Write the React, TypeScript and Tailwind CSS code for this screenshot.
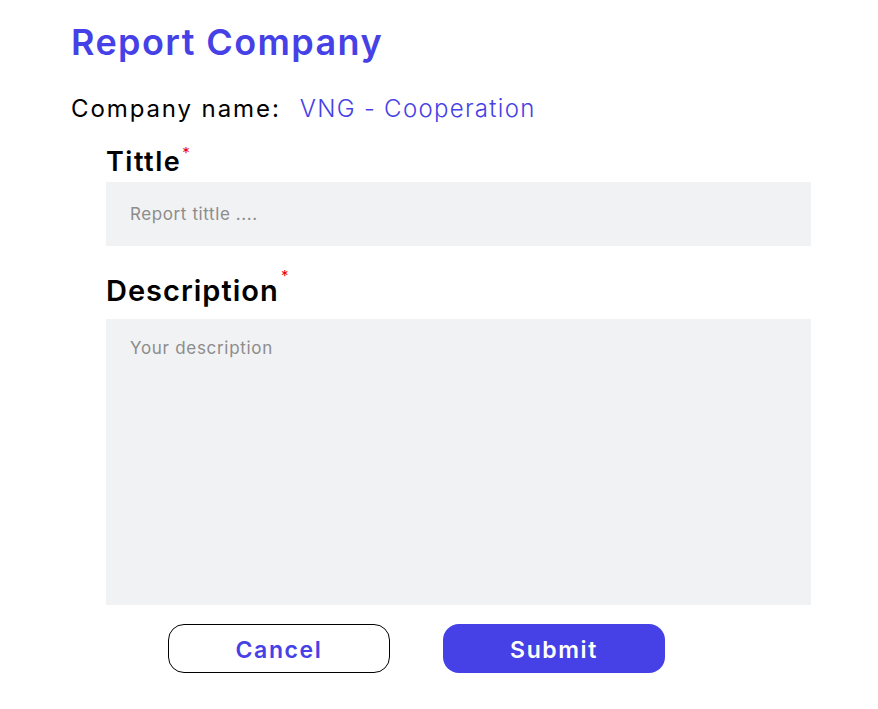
// Report company form
export default function App() {
  return (
    <div
      className="min-h-screen bg-white pl-[71px] pt-[18px]"
      style={{ fontFamily: "Inter, 'Noto Sans', sans-serif" }}
    >
      <h1 className="text-[36px] font-semibold leading-[48px] tracking-[1.4px] text-[#4641e6]">
        Report Company
      </h1>

      <div className="mt-[28px] flex items-baseline text-[24px] leading-[30px]">
        <span className="tracking-[1.9px] text-black">Company name:</span>
        <span className="ml-[19px] font-light tracking-[1.3px] text-[#4641e6]">VNG - Cooperation</span>
      </div>

      <form className="ml-[35px] mt-[18px] w-[705px]">
        <label className="block">
          <span className="relative inline-block text-[27px] font-semibold leading-[40px] tracking-[1.5px] text-black">
            Tittle
            <span className="absolute -right-[10px] top-[-9px] text-[15px] font-normal text-red-600">*</span>
          </span>
          <input
            placeholder="Report tittle ...."
            className="block h-[64px] w-full bg-[#f1f2f4] px-[24px] text-[17px] tracking-[0.6px] text-black outline-none placeholder:text-[#8c8c8c]"
          />
        </label>

        <label className="mt-[25px] block">
          <span className="relative inline-block text-[29px] font-semibold leading-[40px] tracking-[1px] text-black">
            Description
            <span className="absolute -right-[11px] top-[-15px] text-[15px] font-normal text-red-600">*</span>
          </span>
          <textarea
            placeholder="Your description"
            className="mt-[8px] block h-[286px] w-full resize-none bg-[#f1f2f4] px-[24px] pt-[17px] text-[17px] tracking-[0.7px] text-black outline-none placeholder:text-[#8c8c8c]"
          />
        </label>

        <div className="mt-[19px] flex gap-[53px] pl-[62px]">
          <button
            type="button"
            className="h-[49px] w-[222px] rounded-[16px] border border-black bg-white pt-[3px] text-[23px] font-semibold tracking-[1.6px] text-[#4641e6]"
          >
            Cancel
          </button>
          <button
            type="submit"
            className="h-[49px] w-[222px] rounded-[16px] bg-[#4641e6] pt-[3px] text-[23px] font-semibold tracking-[1.6px] text-white"
          >
            Submit
          </button>
        </div>
      </form>
    </div>
  );
}
